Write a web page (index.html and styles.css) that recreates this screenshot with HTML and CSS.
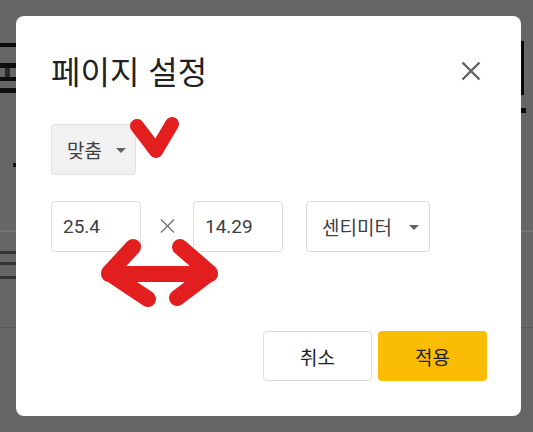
FILE: index.html
```html
<!DOCTYPE html>
<html lang="ko">
<head>
<meta charset="utf-8">
<title>페이지 설정</title>
<link rel="stylesheet" href="styles.css">
</head>
<body>
<div class="page">
  <div class="backdrop">
    <div class="deco deco-l1"></div>
    <div class="deco deco-l2"></div>
    <div class="deco deco-l3"></div>
    <div class="deco deco-l4"></div>
    <div class="deco deco-lv"></div>
    <div class="deco deco-sq"></div>
    <div class="deco deco-line1"></div>
    <div class="deco deco-d1"></div>
    <div class="deco deco-d2"></div>
    <div class="deco deco-d3"></div>
    <div class="deco deco-line2"></div>
    <div class="deco deco-r1"></div>
    <div class="deco deco-r2"></div>
  </div>

  <div class="dialog">
    <div class="header">
      <div class="title">페이지 설정</div>
      <div class="close">
        <svg width="20" height="20" viewBox="0 0 20 20"><path d="M1.5 1.5 L18.5 18.5 M18.5 1.5 L1.5 18.5" stroke="#5f6368" stroke-width="2.4" fill="none"/></svg>
      </div>
    </div>

    <div class="row-fit">
      <div class="select select-fit"><span>맞춤</span><span class="caret"></span></div>
    </div>

    <div class="row-size">
      <div class="field">25.4</div>
      <div class="times">
        <svg width="15" height="14" viewBox="0 0 15 14"><path d="M1 0.5 L14 13.5 M14 0.5 L1 13.5" stroke="#6f7378" stroke-width="1.4" fill="none"/></svg>
      </div>
      <div class="field">14.29</div>
      <div class="select select-unit"><span>센티미터</span><span class="caret"></span></div>
    </div>

    <div class="actions">
      <div class="btn btn-cancel">취소</div>
      <div class="btn btn-apply">적용</div>
    </div>
  </div>

  <svg class="marks" width="533" height="432" viewBox="0 0 533 432">
    <path d="M137 126 L156 151 L172 124" stroke="#e31e1e" stroke-width="14" stroke-linecap="round" stroke-linejoin="round" fill="none"/>
    <path d="M133 247 L109 273 L148 299 M109 274 L210 274 M180 247 L210 273 L177 298" stroke="#e31e1e" stroke-width="16" stroke-linecap="round" stroke-linejoin="round" fill="none"/>
  </svg>
</div>
</body>
</html>
```

FILE: styles.css
```css
* { box-sizing: border-box; }
html, body { margin: 0; padding: 0; }
body {
  background: #666666;
  font-family: Roboto, "Noto Sans CJK KR", sans-serif;
  color: #3c4043;
}
.page {
  position: relative;
  width: 533px;
  height: 432px;
  overflow: hidden;
}
.backdrop { position: absolute; inset: 0; }
.deco { position: absolute; }
.deco-l1 { left: 0; top: 43px; width: 16px; height: 4px; background: #0c0c0c; }
.deco-l2 { left: 0; top: 63px; width: 16px; height: 5px; background: #0c0c0c; }
.deco-lv { left: 5px; top: 68px; width: 5px; height: 9px; background: #2a2a2a; }
.deco-l3 { left: 0; top: 77px; width: 16px; height: 4px; background: #0c0c0c; }
.deco-l4 { left: 0; top: 88px; width: 16px; height: 5px; background: #0c0c0c; }
.deco-sq { left: 13px; top: 163px; width: 3px; height: 4px; background: #111; }
.deco-line1 { left: 0; top: 230px; width: 533px; height: 2px; background: #747474; }
.deco-d1 { left: 0; top: 251px; width: 16px; height: 3px; background: #333; }
.deco-d2 { left: 0; top: 262px; width: 16px; height: 3px; background: #333; }
.deco-d3 { left: 0; top: 276px; width: 16px; height: 3px; background: #333; }
.deco-line2 { left: 0; top: 327px; width: 533px; height: 1px; background: #5a5a5a; }
.deco-r1 { left: 521px; top: 41px; width: 3px; height: 54px; background: #0a0a0a; }
.deco-r2 { left: 521px; top: 108px; width: 5px; height: 5px; background: #0a0a0a; }

.dialog {
  position: absolute;
  left: 16px;
  top: 16px;
  width: 505px;
  height: 400px;
  background: #fff;
  border-radius: 8px;
  padding: 32px 34px 35px 35px;
  display: flex;
  flex-direction: column;
}
.header {
  height: 44px;
  display: flex;
  align-items: center;
  justify-content: space-between;
}
.title {
  font-family: "Noto Sans CJK KR", sans-serif;
  font-size: 32px;
  color: #202124;
  line-height: 44px;
  margin-top: -1px;
}
.close {
  width: 20px;
  height: 20px;
  margin-right: 6px;
  margin-top: 1px;
  display: flex;
}
.row-fit { margin-top: 32px; display: flex; }
.select {
  height: 51px;
  border-radius: 4px;
  display: flex;
  align-items: center;
  font-size: 19px;
  color: #3c4043;
}
.select-fit {
  width: 85px;
  background: #f1f1f1;
  border: 1px solid #e0e0e0;
  padding: 0 9px 0 15px;
  justify-content: space-between;
}
.select-unit {
  width: 124px;
  margin-left: 23px;
  background: #fff;
  border: 1px solid #dadce0;
  padding: 0 10px 0 15px;
  justify-content: space-between;
}
.caret {
  width: 0;
  height: 0;
  border-left: 5px solid transparent;
  border-right: 5px solid transparent;
  border-top: 5px solid #5f6368;
  margin-top: 1px;
}
.row-size {
  margin-top: 26px;
  display: flex;
  align-items: center;
}
.field {
  width: 90px;
  height: 51px;
  border: 1px solid #dadce0;
  border-radius: 4px;
  padding-left: 11px;
  display: flex;
  align-items: center;
  font-size: 19px;
  color: #3c4043;
}
.times {
  width: 52px;
  display: flex;
  justify-content: center;
  margin-top: -2px;
}
.actions {
  margin-top: auto;
  display: flex;
  justify-content: flex-end;
  gap: 6px;
}
.btn {
  width: 109px;
  height: 50px;
  border-radius: 4px;
  display: flex;
  align-items: center;
  justify-content: center;
  font-size: 19px;
  color: #202124;
}
.btn-cancel { background: #fff; border: 1px solid #dadce0; }
.btn-apply { background: #fbbc04; }

.marks {
  position: absolute;
  left: 0;
  top: 0;
  pointer-events: none;
}
```
